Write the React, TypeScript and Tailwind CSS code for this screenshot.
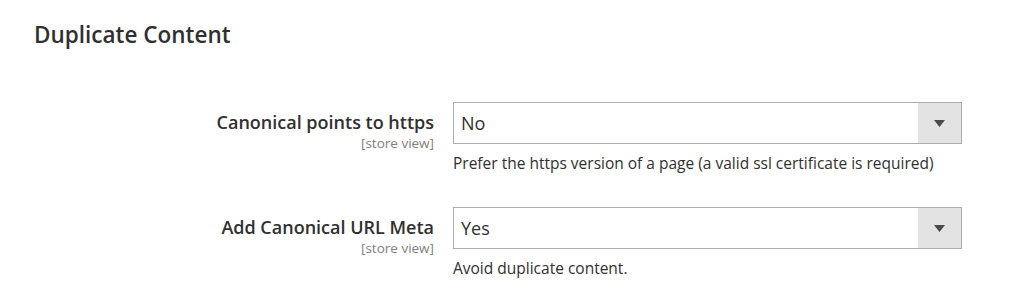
import React from "react";

interface FieldProps {
  label: string;
  value: string;
  note: string;
}

const SelectField = ({ label, value, note }: FieldProps) => {
  return (
    <div className="flex">
      <div className="flex w-[434px] shrink-0 flex-col items-end pt-[8px]">
        <span className="text-[18px] font-semibold leading-[24px] text-[#303030]">
          {label}
        </span>
        <span className="mt-[1px] text-[13.5px] leading-[17px] text-[#808080]">
          [store view]
        </span>
      </div>
      <div className="ml-[19px] flex w-[509px] flex-col">
        <div className="flex h-[42px] border border-[#adadad] bg-white">
          <div className="flex flex-1 items-center pl-[7px] text-[18px] text-[#303030]">
            {value}
          </div>
          <div className="flex w-[43px] items-center justify-center bg-[#e3e3e3]">
            <svg width="11" height="7" viewBox="0 0 11 7">
              <path d="M0 0 H11 L5.5 7 Z" fill="#514943" />
            </svg>
          </div>
        </div>
        <p className="mt-[9px] text-[15.5px] leading-[21px] text-[#303030]">
          {note}
        </p>
      </div>
    </div>
  );
};

export default function App() {
  return (
    <div
      className="h-[302px] w-[1024px] bg-white"
      style={{ fontFamily: '"Open Sans", "Liberation Sans", sans-serif' }}
    >
      <div className="pl-[34px] pt-[19px]">
        <h2 className="text-[22.5px] font-semibold leading-[32px] text-[#303030]">
          Duplicate Content
        </h2>
      </div>
      <div className="mt-[51px] flex flex-col gap-[33px]">
        <SelectField
          label="Canonical points to https"
          value="No"
          note="Prefer the https version of a page (a valid ssl certificate is required)"
        />
        <SelectField
          label="Add Canonical URL Meta"
          value="Yes"
          note="Avoid duplicate content."
        />
      </div>
    </div>
  );
}
